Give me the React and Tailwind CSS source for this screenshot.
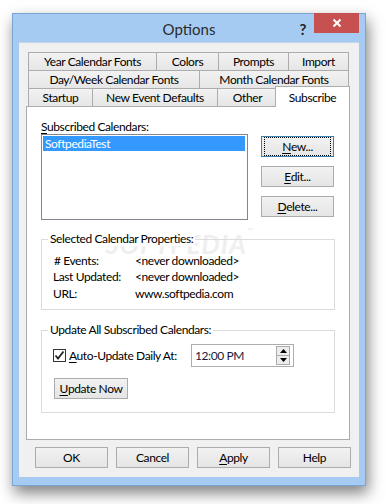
import React from "react";

const font = "font-['Lato','Liberation_Sans',sans-serif] tracking-[-0.4px]";

function Tab({ w, children }) {
  return (
    <div
      className={`-ml-px first:ml-0 h-[19px] border border-[#acacac] bg-gradient-to-b from-[#f2f2f2] to-[#e6e6e6] flex items-center justify-center text-[12px] text-black ${w}`}
    >
      {children}
    </div>
  );
}

function Btn({ w = "w-[73px]", h = "h-[21px]", focused, children }) {
  return (
    <div
      className={`${w} ${h} border ${focused ? "border-[#3c7fb1]" : "border-[#acacac]"} bg-gradient-to-b from-[#f2f2f2] to-[#e5e5e5] flex items-center justify-center text-[12px] text-black`}
    >
      {focused ? (
        <div className="w-full h-full m-[2px] border border-dotted border-black flex items-center justify-center">
          {children}
        </div>
      ) : (
        children
      )}
    </div>
  );
}

function U({ children }) {
  return <span className="underline underline-offset-[2px]">{children}</span>;
}

export default function App() {
  return (
    <div className={`w-[386px] h-[504px] bg-white pt-[13px] pl-[12px] ${font}`}>
      {/* Window */}
      <div className="w-[354px] h-[473px] border border-[#7ba5d6] bg-[#a5cbf3] flex flex-col shadow-[2px_7px_14px_rgba(0,0,0,0.5)]">
        {/* Title bar */}
        <div className="h-[28px] relative flex items-center justify-center">
          <span className="text-[15px] tracking-normal text-[#2b2b2b] mt-[2px]">Options</span>
          <span className="absolute right-[59px] top-[4px] text-[15px] font-bold text-[#222]">?</span>
          <div className="absolute right-[6px] -top-px w-[45px] h-[20px] bg-[#c75050] flex items-center justify-center">
            <svg width="10" height="10" viewBox="0 0 10 10">
              <path d="M1.5 1.5 L8.5 8.5 M8.5 1.5 L1.5 8.5" stroke="#fff" strokeWidth="2" />
            </svg>
          </div>
        </div>

        {/* Client */}
        <div className="mx-[6px] h-[435px] bg-[#f0f0f0] border-t border-[#c3d6ea] pl-[7px] pt-[9px]">
          {/* Tabs */}
          <div className="pl-[2px]">
            <div className="flex">
              <Tab w="w-[129px]">Year Calendar Fonts</Tab>
              <Tab w="w-[63px]">Colors</Tab>
              <Tab w="w-[71px]">Prompts</Tab>
              <Tab w="w-[61px]">Import</Tab>
            </div>
            <div className="flex -mt-px">
              <Tab w="w-[172px]">Day/Week Calendar Fonts</Tab>
              <Tab w="w-[150px]">Month Calendar Fonts</Tab>
            </div>
            <div className="flex -mt-px items-start h-[19px]">
              <Tab w="w-[65px]">Startup</Tab>
              <Tab w="w-[126px]">New Event Defaults</Tab>
              <Tab w="w-[61px]">Other</Tab>
              <div className="-ml-[3px] relative z-10 -top-[2px] w-[75px] h-[21px] border border-b-0 border-[#acacac] bg-white flex items-start justify-center pt-[2px] text-[12px] text-black">
                Subscribe
              </div>
            </div>
          </div>

          {/* Panel */}
          <div className="-mt-px w-[324px] h-[334px] border border-[#acacac] bg-white pl-[14px] pt-[12px] relative">
            <div className="absolute left-[78px] top-[118px] text-[26px] tracking-[1px] text-[#efefef] font-bold italic select-none">
              SOFTPEDIA<span className="text-[8px] align-top">™</span>
            </div>

            <div className="relative text-[12px] leading-[15px] text-black">
              <U>S</U>ubscribed Calendars:
            </div>
            <div className="relative flex">
              <div className="w-[207px] h-[86px] border border-[#828790] bg-white p-px">
                <div className="h-[15px] bg-[#3399ff] text-white text-[12px] leading-[15px] pl-[2px] mr-px">
                  SoftpediaTest
                </div>
              </div>
              <div className="ml-[13px] flex flex-col gap-[9px] mt-[2px]">
                <Btn focused>
                  <U>N</U>ew...
                </Btn>
                <Btn>
                  <U>E</U>dit...
                </Btn>
                <Btn>
                  <U>D</U>elete...
                </Btn>
              </div>
            </div>

            {/* Selected Calendar Properties */}
            <div className="relative mt-[19px] w-[294px] h-[71px] border border-[#dcdcdc] text-[12px] leading-[15px] text-black">
              <div className="absolute -top-[9px] left-[6px] bg-white px-[2px]">
                Selected Calendar Properties:
              </div>
              <div className="pl-[11px] pt-[13px] grid grid-cols-[82px_1fr] gap-y-[1px]">
                <span className="pl-px">#&nbsp;Events:</span>
                <span>&lt;never downloaded&gt;</span>
                <span>Last Updated:</span>
                <span>&lt;never downloaded&gt;</span>
                <span className="mt-[1px]">URL:</span>
                <span className="mt-[1px]">www.softpedia.com</span>
              </div>
            </div>

            {/* Update All Subscribed Calendars */}
            <div className="relative mt-[20px] w-[294px] h-[83px] border border-[#dcdcdc] text-[12px] leading-[15px] text-black">
              <div className="absolute -top-[9px] left-[6px] bg-white px-[2px]">
                Update All Subscribed Calendars:
              </div>
              <div className="flex items-center pl-[11px] pt-[13px]">
                <div className="w-[13px] h-[13px] border border-[#333] bg-white flex items-center justify-center">
                  <svg width="11" height="11" viewBox="0 0 11 11">
                    <path d="M1.5 5.5 L4 8.5 L9.5 1.5" stroke="#222" strokeWidth="1.8" fill="none" />
                  </svg>
                </div>
                <span className="ml-[3px]">
                  <U>A</U>uto-Update Daily At:
                </span>
                <div className="ml-auto mr-[40px] w-[103px] h-[23px] border border-[#abadb3] bg-white flex items-center justify-between pl-[3px] pr-[3px]">
                  <span className="text-[#1a1a3a]">12:00 PM</span>
                  <div className="flex flex-col w-[14px] h-[19px] border border-[#acacac] bg-[#ededed]">
                    <div className="flex-1 flex items-center justify-center border-b border-[#acacac]">
                      <svg width="7" height="4" viewBox="0 0 7 4">
                        <path d="M3.5 0 L7 4 L0 4 Z" fill="#000" />
                      </svg>
                    </div>
                    <div className="flex-1 flex items-center justify-center">
                      <svg width="7" height="4" viewBox="0 0 7 4">
                        <path d="M0 0 L7 0 L3.5 4 Z" fill="#000" />
                      </svg>
                    </div>
                  </div>
                </div>
              </div>
              <div className="pl-[12px] mt-[11px]">
                <Btn w="w-[74px]" h="h-[21px]">
                  <U>U</U>pdate Now
                </Btn>
              </div>
            </div>
          </div>

          {/* Bottom buttons */}
          <div className="flex gap-[8px] pl-[9px] mt-[7px]">
            <Btn>OK</Btn>
            <Btn>Cancel</Btn>
            <Btn>
              <U>A</U>pply
            </Btn>
            <Btn>Help</Btn>
          </div>
        </div>
      </div>
    </div>
  );
}
